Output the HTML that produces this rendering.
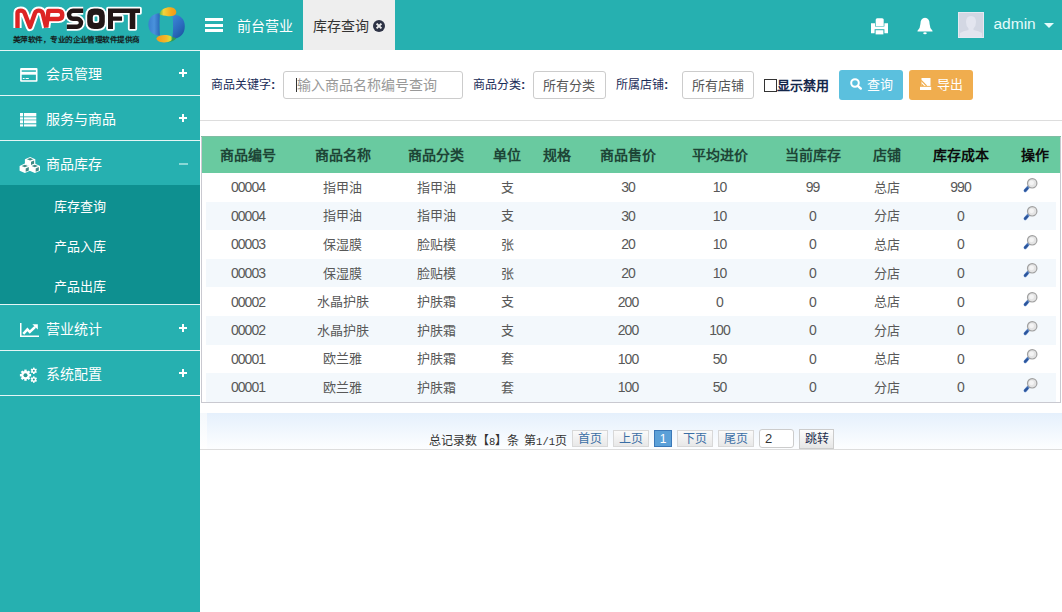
<!DOCTYPE html>
<html lang="zh-CN">
<head>
<meta charset="utf-8">
<style>
*{box-sizing:border-box;margin:0;padding:0}
html,body{width:1062px;height:612px;overflow:hidden;background:#fff;font-family:"Liberation Sans",sans-serif;}
.abs{position:absolute}
#header{position:absolute;left:0;top:0;width:1062px;height:50px;background:#26b0b0}
#sidebar{position:absolute;left:0;top:50px;width:200px;height:562px;background:#26b0b0;border-top:1px solid #e4f6f6}
.mi{position:absolute;left:0;width:200px;height:45px;border-bottom:1px solid #e4f6f6;color:#fff;font-size:14px}
.mi .t{position:absolute;left:46px;top:1px;line-height:44px}
.mi .pl{position:absolute;left:179px;top:18px;width:8px;height:8px}
.mi .pl:before{content:"";position:absolute;left:0;top:3px;width:8px;height:2px;background:#fff}
.mi .pl:after{content:"";position:absolute;left:3px;top:0;width:2px;height:8px;background:#fff}
.sub{position:absolute;left:0;top:185px;width:200px;height:120px;background:#0e9090;border-bottom:1px solid #e4f6f6}
.sub div{position:absolute;left:54px;height:40px;line-height:40px;color:#fff;font-size:13px}
#content{position:absolute;left:200px;top:50px;width:862px;height:562px;background:#fff}
.lbl{position:absolute;font-size:12px;color:#1a2c58;line-height:14px}
.box{position:absolute;border:1px solid #ccc;border-radius:3px;background:#fff;height:28px;top:71px}
.btn{position:absolute;top:70px;height:30px;width:64px;border-radius:3px;color:#fff;font-size:13px}
.tbl{position:absolute;left:201px;top:136px;width:860px;height:267px;border:1px solid #c9c9d0;border-top:none}
table{position:absolute;left:0;top:0;width:858px;border-collapse:collapse;table-layout:fixed}
th{background:#69caa0;height:37px;font-size:14px;font-weight:bold;color:#1d4536;text-align:center;padding:0 0 1px 0}
td{height:28.6px;font-size:13px;color:#585858;text-align:center;padding:0 0 2px 0}
.altbg{position:absolute;left:4px;width:850px;height:28.6px;background:#f3f8fc}
#pager{position:absolute;left:200px;top:413px;width:862px;height:37px;background:linear-gradient(#f4f8fc,#fff);border-bottom:1px solid #ddd}
#pager:after{content:"";position:absolute;left:7px;top:0;right:0;bottom:0;background:linear-gradient(#e5f0fc,#fdfeff)}
.pg{position:absolute;top:430px;height:17px;border:1px solid #d8d8d8;background:linear-gradient(#fafafa,#e8e8e8);color:#3a6ea5;font-size:12px;line-height:17px;text-align:center}
td.n{font-size:14px;letter-spacing:-1px;padding:0}
</style>
</head>
<body>
<div id="header">
<!-- logo -->
<svg class="abs" style="left:0;top:0" width="200" height="50" viewBox="0 0 200 50">
  <defs>
    <linearGradient id="ylw" x1="0" y1="0" x2="1" y2="0"><stop offset="0" stop-color="#f7d425"/><stop offset="1" stop-color="#f29a1e"/></linearGradient>
    <linearGradient id="blu" x1="0" y1="0" x2="1" y2="0"><stop offset="0" stop-color="#2f74c4"/><stop offset="0.35" stop-color="#3f8bd6"/><stop offset="0.65" stop-color="#2a6ec0"/><stop offset="1" stop-color="#3a86d2"/></linearGradient>
    <linearGradient id="bl1" x1="0" y1="0" x2="1" y2="0"><stop offset="0" stop-color="#3a7fcf"/><stop offset="0.5" stop-color="#4a92dc"/><stop offset="1" stop-color="#2868b8"/></linearGradient>
    <linearGradient id="bl2" x1="0" y1="0" x2="0.6" y2="1"><stop offset="0" stop-color="#3d8ad8"/><stop offset="0.6" stop-color="#2c6cc0"/><stop offset="1" stop-color="#1d58a5"/></linearGradient>
    <linearGradient id="yl1" x1="0" y1="0" x2="1" y2="0"><stop offset="0" stop-color="#58b84a"/><stop offset="0.25" stop-color="#f2d43a"/><stop offset="0.7" stop-color="#f5a81c"/><stop offset="1" stop-color="#f29a1a"/></linearGradient>
    <linearGradient id="yl2" x1="0" y1="0" x2="1" y2="0"><stop offset="0" stop-color="#f39a1a"/><stop offset="0.6" stop-color="#f4b82a"/><stop offset="0.85" stop-color="#d9e03a"/><stop offset="1" stop-color="#3aa84a"/></linearGradient>
    <clipPath id="ring"><path clip-rule="evenodd" d="M148 25.1A18.5 18.6 0 1 0 185 25.1A18.5 18.6 0 1 0 148 25.1ZM159.2 25.8A6.8 10.3 0 1 0 172.8 25.8A6.8 10.3 0 1 0 159.2 25.8Z"/></clipPath>
  </defs>
  <g fill="none" stroke-linejoin="round">
    <path d="M17.5 28V13Q17.5 10.6 20.8 10.6Q23.6 10.6 24.6 13L30 27L35 13Q36 10.6 38.8 10.6Q41.6 10.6 42.6 13L46.2 27.5M46.2 27.5L48.5 10.9H58.3Q62.3 10.9 62.3 15Q62.3 19 58.3 19H49.2" stroke="#fff" stroke-width="8.2"/>
    <path d="M17.5 28V13Q17.5 10.6 20.8 10.6Q23.6 10.6 24.6 13L30 27L35 13Q36 10.6 38.8 10.6Q41.6 10.6 42.6 13L46.2 27.5" stroke="#dd2424" stroke-width="4.4"/>
    <path d="M46.2 27.5L48.5 10.9H58.3Q62.3 10.9 62.3 15Q62.3 19 58.3 19H49.2" stroke="#dd2424" stroke-width="4.4"/>
  </g>
  <g fill="none">
    <path d="M83.2 10.8H73A4 4 0 0 0 73 18.8H77A4 4 0 0 1 77 26.8H66.8" stroke="#fff" stroke-width="8"/>
    <path d="M83.2 10.8H73A4 4 0 0 0 73 18.8H77A4 4 0 0 1 77 26.8H66.8" stroke="#221616" stroke-width="4.4"/>
  </g>
  <g fill="#221616" stroke="#fff" stroke-width="3.6" stroke-linejoin="round" paint-order="stroke">
    
    <path fill-rule="evenodd" d="M94.2 8.6H97.8Q104.8 8.6 104.8 15.6V22Q104.8 29 97.8 29H94.2Q87.2 29 87.2 22V15.6Q87.2 8.6 94.2 8.6ZM95 14.8Q92.8 14.8 92.8 17V20.8Q92.8 23 95 23H97Q99.2 23 99.2 20.8V17Q99.2 14.8 97 14.8Z"/>
    <path d="M108 8.6H140V13H135.3V29H129.7V13H113V16.6H122V20.8H113V29H108Z"/>
  </g>
  <text x="13" y="41.6" font-size="7.2" font-weight="bold" fill="#142020" textLength="126.5" lengthAdjust="spacingAndGlyphs">美萍软件，专业的企业管理软件提供商</text>
  <path d="M159.9 13.2C152.5 13.5 148.4 18 148.4 24.6C148.4 31.2 152.5 35.6 159.9 35.8C159.4 28 159.4 21 159.9 13.2Z" fill="url(#bl1)"/>
  <path d="M172.4 14.8C180.8 14.6 184.8 19.2 184.8 26.2C184.8 33.2 181 38.6 172.2 38.6C173.4 31 173.4 22.5 172.4 14.8Z" fill="url(#bl2)"/>
  <path d="M168 42.4C171.5 41.8 174.5 40.4 176.5 38.2L172.2 36.8Z" fill="#2e9a55"/>
  <path d="M159.4 14.6C160.5 8.6 167 6.6 171.8 7.4C175.2 8 176.8 10.6 176.2 13C175.6 15.6 172 16.6 168 16.2C164.5 15.8 161.6 15.3 159.4 14.6Z" fill="url(#yl1)"/>
  <path d="M156.4 38.2C157.8 35.4 162.5 34.6 166.8 35C170 35.4 172.2 36.4 172.8 38C172.2 41 168.4 42.6 163.6 42.4C159.4 42.2 156.4 40.6 156.4 38.2Z" fill="url(#yl2)"/>
</svg>
<!-- hamburger -->
<div class="abs" style="left:205px;top:18px;width:18px;height:3px;background:#fff"></div>
<div class="abs" style="left:205px;top:23.5px;width:18px;height:3px;background:#fff"></div>
<div class="abs" style="left:205px;top:29px;width:18px;height:3px;background:#fff"></div>
<span class="abs" style="left:237px;top:17px;font-size:14px;line-height:18px;color:#fff">前台营业</span>
<div class="abs" style="left:303px;top:0;width:92px;height:50px;background:#eeeeee"></div>
<span class="abs" style="left:313px;top:17px;font-size:14px;line-height:18px;color:#333">库存查询</span>
<svg class="abs" style="left:373px;top:19.5px" width="12" height="12" viewBox="0 0 12 12"><circle cx="6" cy="6" r="6" fill="#2e3345"/><path d="M3.6 3.6L8.4 8.4M8.4 3.6L3.6 8.4" stroke="#eee" stroke-width="2"/></svg>
<!-- printer -->
<svg class="abs" style="left:870.6px;top:17.5px" width="17" height="17" viewBox="0 0 17 17">
  <path d="M4.7 8V1.8Q4.7 0.3 6.2 0.3H11.2Q12.7 0.3 12.7 1.8V8Z" fill="#fff"/>
  <path d="M0 5.3H4V8.6H13.4V5.3H17V15.3H0Z" fill="#fff"/>
  <path d="M3.6 11.2H13.4V16.4H3.6Z" fill="#26b0b0"/>
  <path d="M4.6 12.2H12.4V16.4H4.6Z" fill="#fff"/>
</svg>
<!-- bell -->
<svg class="abs" style="left:917px;top:17px" width="16" height="18" viewBox="0 0 16 18">
  <path d="M8 0.8Q12.5 1 12.6 7Q12.8 11.5 15.5 13.8V14.6H0.5V13.8Q3.2 11.5 3.4 7Q3.5 1 8 0.8Z" fill="#fff"/>
  <ellipse cx="8" cy="16.3" rx="1.8" ry="1" fill="#fff"/>
</svg>
<!-- avatar -->
<svg class="abs" style="left:958px;top:12px" width="26" height="26" viewBox="0 0 26 26">
  <rect x="0.5" y="0.5" width="25" height="25" fill="#d3d7e3" stroke="#e6e9f2"/>
  <path d="M13 4Q18 4 18 10Q18 14 15.5 16.5V18Q21 19 24 21V25H2V21Q5 19 10.5 18V16.5Q8 14 8 10Q8 4 13 4Z" fill="#e3e5ef"/>
</svg>
<span class="abs" style="left:993.5px;top:15px;font-size:15.5px;line-height:18px;color:#e4fbfb">admin</span>
<svg class="abs" style="left:1044px;top:23px" width="10" height="5" viewBox="0 0 10 5"><path d="M0 0H10L5 5Z" fill="#e4fbfb"/></svg>
</div>
<div id="sidebar"></div>
<div class="mi" style="top:51px"><span class="t">会员管理</span><span class="pl"></span></div>
<div class="mi" style="top:96px"><span class="t">服务与商品</span><span class="pl"></span></div>
<div class="mi" style="top:141px;border-bottom:none;height:44px"><span class="t">商品库存</span></div>
<div class="sub">
  <div style="top:1.5px">库存查询</div>
  <div style="top:41.8px">产品入库</div>
  <div style="top:82px">产品出库</div>
</div>
<div class="mi" style="top:306px"><span class="t">营业统计</span><span class="pl"></span></div>
<div class="mi" style="top:351px"><span class="t">系统配置</span><span class="pl"></span></div>


<!-- card icon -->
<svg class="abs" style="left:20px;top:68px" width="18" height="14" viewBox="0 0 18 14">
  <rect x="0.1" y="0" width="17.4" height="13.8" rx="1" fill="#fff"/>
  <rect x="1.7" y="2.3" width="14.2" height="1.5" fill="#26b0b0"/>
  <rect x="1.7" y="6.7" width="14.2" height="5.5" fill="#26b0b0"/>
  <rect x="2.8" y="10" width="1.8" height="1" fill="#fff"/><rect x="5.6" y="10" width="3.2" height="1" fill="#fff"/>
</svg>
<!-- list icon -->
<svg class="abs" style="left:20px;top:112.6px" width="17" height="14" viewBox="0 0 17 14">
  <g fill="#fff">
  <rect x="0" y="0" width="3" height="3.4"/><rect x="3.9" y="0" width="12.4" height="3.4"/>
  <rect x="0" y="4.3" width="3" height="2.3"/><rect x="3.9" y="4.3" width="12.4" height="2.3"/>
  <rect x="0" y="7.3" width="3" height="3"/><rect x="3.9" y="7.3" width="12.4" height="3"/>
  <rect x="0" y="11.3" width="3" height="2.2"/><rect x="3.9" y="11.3" width="12.4" height="2.2"/>
  </g>
</svg>
<!-- cubes icon -->
<svg class="abs" style="left:0;top:0" width="50" height="200" viewBox="0 0 50 200"><path d="M30.1 156.9L35.300000000000004 159.25V163.95L30.1 166.29999999999998L24.900000000000002 163.95V159.25Z" fill="#fff"/><path d="M26.900000000000002 159.29999999999998L30.1 158.1L33.300000000000004 159.29999999999998L30.1 160.5Z" fill="#3f8a84"/><path d="M31.0 161.7L34.1 160.4V163.7L31.0 165.1Z" fill="#3f8a84"/><path d="M24.8 163.60000000000002L30.0 165.95000000000002V170.65L24.8 173.0L19.6 170.65V165.95000000000002Z" fill="#fff"/><path d="M21.6 166.0L24.8 164.8L28.0 166.0L24.8 167.20000000000002Z" fill="#3f8a84"/><path d="M25.7 168.4L28.8 167.10000000000002V170.4L25.7 171.8Z" fill="#3f8a84"/><path d="M34.8 163.60000000000002L40.0 165.95000000000002V170.65L34.8 173.0L29.599999999999998 170.65V165.95000000000002Z" fill="#fff"/><path d="M31.599999999999998 166.0L34.8 164.8L38.0 166.0L34.8 167.20000000000002Z" fill="#3f8a84"/><path d="M35.699999999999996 168.4L38.8 167.10000000000002V170.4L35.699999999999996 171.8Z" fill="#3f8a84"/></svg>
<!-- chart icon -->
<svg class="abs" style="left:20px;top:323px" width="19" height="14" viewBox="0 0 19 14">
  <path d="M0.75 0V13.25H19" fill="none" stroke="#fff" stroke-width="1.5"/>
  <path d="M3.3 10.8L7.4 6.4L9.8 9L15.2 3.8" fill="none" stroke="#fff" stroke-width="2.5"/>
  <path d="M12.4 1.2H17.8V6.6Z" fill="#fff"/>
</svg>
<!-- gears icon -->
<svg class="abs" style="left:0;top:0" width="50" height="400" viewBox="0 0 50 400"><circle cx="25.5" cy="375.2" r="4.1" fill="#fff"/><rect x="24.30" y="369.60" width="2.4" height="11.20" fill="#fff" transform="rotate(0.0 25.5 375.2)"/><rect x="24.30" y="369.60" width="2.4" height="11.20" fill="#fff" transform="rotate(45.0 25.5 375.2)"/><rect x="24.30" y="369.60" width="2.4" height="11.20" fill="#fff" transform="rotate(90.0 25.5 375.2)"/><rect x="24.30" y="369.60" width="2.4" height="11.20" fill="#fff" transform="rotate(135.0 25.5 375.2)"/><circle cx="25.5" cy="375.2" r="2.0" fill="#2a9a92"/><circle cx="33.8" cy="370.8" r="2.4" fill="#fff"/><rect x="33.00" y="367.60" width="1.6" height="6.40" fill="#fff" transform="rotate(0.0 33.8 370.8)"/><rect x="33.00" y="367.60" width="1.6" height="6.40" fill="#fff" transform="rotate(60.0 33.8 370.8)"/><rect x="33.00" y="367.60" width="1.6" height="6.40" fill="#fff" transform="rotate(120.0 33.8 370.8)"/><circle cx="33.8" cy="370.8" r="1.0" fill="#2a9a92"/><circle cx="33.8" cy="379.6" r="2.4" fill="#fff"/><rect x="33.00" y="376.40" width="1.6" height="6.40" fill="#fff" transform="rotate(0.0 33.8 379.6)"/><rect x="33.00" y="376.40" width="1.6" height="6.40" fill="#fff" transform="rotate(60.0 33.8 379.6)"/><rect x="33.00" y="376.40" width="1.6" height="6.40" fill="#fff" transform="rotate(120.0 33.8 379.6)"/><circle cx="33.8" cy="379.6" r="1.0" fill="#2a9a92"/></svg>
<div class="abs" style="left:178.5px;top:162.5px;width:9px;height:2px;background:#8ad8d6"></div>

<div id="content"></div>
<div class="abs" style="left:200px;top:120px;width:862px;height:1px;background:#ddd"></div>

<span class="lbl" style="left:211px;top:78px">商品关键字<b style="font-size:13px">:</b></span>
<div class="box" style="left:283px;width:180px"></div>
<span class="lbl" style="left:473px;top:78px">商品分类<b style="font-size:13px">:</b></span>
<div class="box" style="left:533px;width:73px"></div>
<span class="lbl" style="left:616px;top:78px">所属店铺<b style="font-size:13px">:</b></span>
<div class="box" style="left:682px;width:72px"></div>

<span class="abs" style="left:296px;top:78px;width:1px;height:14px;background:#333"></span>
<span class="abs" style="left:297px;top:76px;font-size:14px;line-height:18px;color:#999">输入商品名称编号查询</span>
<span class="abs" style="left:543px;top:77px;font-size:13px;line-height:18px;color:#555">所有分类</span>
<span class="abs" style="left:692px;top:77px;font-size:13px;line-height:18px;color:#555">所有店铺</span>
<div class="abs" style="left:764px;top:79px;width:13px;height:13px;border:1px solid #333;background:#fff"></div>
<span class="abs" style="left:777px;top:77.5px;font-size:13px;line-height:16px;font-weight:bold;color:#14264a">显示禁用</span>
<div class="btn" style="left:839px;background:#5bc0de">
<svg class="abs" style="left:11px;top:8px" width="13" height="13" viewBox="0 0 13 13"><circle cx="5" cy="5" r="3.8" fill="none" stroke="#fff" stroke-width="2"/><path d="M7.8 7.8L10.8 10.6" stroke="#fff" stroke-width="2.4" stroke-linecap="round"/></svg>
<span class="abs" style="left:28px;top:7px;font-size:13px;line-height:16px">查询</span></div>
<div class="btn" style="left:909px;background:#f0ad4e">
<svg class="abs" style="left:11px;top:7px" width="12" height="14" viewBox="0 0 12 14"><path d="M0 9.8H11.2V13H0Z" fill="#fff"/><path d="M1.5 1H10.5V8.9H1.5Z" fill="#fff"/><path d="M1.2 3.4L6.6 8.9" stroke="#f0ad4e" stroke-width="1.3"/><path d="M1.5 6.2V8.9H4.2Z" fill="#f0ad4e"/></svg>
<span class="abs" style="left:28px;top:7px;font-size:13px;line-height:16px">导出</span></div>

<div class="tbl">
<div class="altbg" style="top:65.6px"></div><div class="altbg" style="top:122.8px"></div><div class="altbg" style="top:180px"></div><div class="altbg" style="top:237.2px"></div>
<table>
<tr><th style="width:92px">商品编号</th><th style="width:97px">商品名称</th><th style="width:90px">商品分类</th><th style="width:52px">单位</th><th style="width:48px">规格</th><th style="width:94px">商品售价</th><th style="width:89px">平均进价</th><th style="width:97px">当前库存</th><th style="width:51px">店铺</th><th style="width:97px;color:#0c0c0c">库存成本</th><th style="color:#0c0c0c">操作</th></tr>
<tr><td class="n">00004</td><td>指甲油</td><td>指甲油</td><td>支</td><td></td><td class="n">30</td><td class="n">10</td><td class="n">99</td><td>总店</td><td class="n">990</td><td><svg width="16" height="15" viewBox="0 0 16 15" style="display:block;margin:-2.5px auto 0 auto;position:relative;left:-5px"><path d="M6.6 8.8L3.2 12.6" stroke="#5a86c8" stroke-width="3.2" stroke-linecap="round"/><path d="M5.2 10.4L3.2 12.6" stroke="#2c549a" stroke-width="2.2" stroke-linecap="round"/><circle cx="10.2" cy="5.3" r="4.7" fill="#e4e4e4" stroke="#a0a0a0" stroke-width="1.2"/><circle cx="9.6" cy="4.8" r="2.4" fill="#f4f4f4"/></svg></td></tr>
<tr><td class="n">00004</td><td>指甲油</td><td>指甲油</td><td>支</td><td></td><td class="n">30</td><td class="n">10</td><td class="n">0</td><td>分店</td><td class="n">0</td><td><svg width="16" height="15" viewBox="0 0 16 15" style="display:block;margin:-2.5px auto 0 auto;position:relative;left:-5px"><path d="M6.6 8.8L3.2 12.6" stroke="#5a86c8" stroke-width="3.2" stroke-linecap="round"/><path d="M5.2 10.4L3.2 12.6" stroke="#2c549a" stroke-width="2.2" stroke-linecap="round"/><circle cx="10.2" cy="5.3" r="4.7" fill="#e4e4e4" stroke="#a0a0a0" stroke-width="1.2"/><circle cx="9.6" cy="4.8" r="2.4" fill="#f4f4f4"/></svg></td></tr>
<tr><td class="n">00003</td><td>保湿膜</td><td>脸贴模</td><td>张</td><td></td><td class="n">20</td><td class="n">10</td><td class="n">0</td><td>总店</td><td class="n">0</td><td><svg width="16" height="15" viewBox="0 0 16 15" style="display:block;margin:-2.5px auto 0 auto;position:relative;left:-5px"><path d="M6.6 8.8L3.2 12.6" stroke="#5a86c8" stroke-width="3.2" stroke-linecap="round"/><path d="M5.2 10.4L3.2 12.6" stroke="#2c549a" stroke-width="2.2" stroke-linecap="round"/><circle cx="10.2" cy="5.3" r="4.7" fill="#e4e4e4" stroke="#a0a0a0" stroke-width="1.2"/><circle cx="9.6" cy="4.8" r="2.4" fill="#f4f4f4"/></svg></td></tr>
<tr><td class="n">00003</td><td>保湿膜</td><td>脸贴模</td><td>张</td><td></td><td class="n">20</td><td class="n">10</td><td class="n">0</td><td>分店</td><td class="n">0</td><td><svg width="16" height="15" viewBox="0 0 16 15" style="display:block;margin:-2.5px auto 0 auto;position:relative;left:-5px"><path d="M6.6 8.8L3.2 12.6" stroke="#5a86c8" stroke-width="3.2" stroke-linecap="round"/><path d="M5.2 10.4L3.2 12.6" stroke="#2c549a" stroke-width="2.2" stroke-linecap="round"/><circle cx="10.2" cy="5.3" r="4.7" fill="#e4e4e4" stroke="#a0a0a0" stroke-width="1.2"/><circle cx="9.6" cy="4.8" r="2.4" fill="#f4f4f4"/></svg></td></tr>
<tr><td class="n">00002</td><td>水晶护肤</td><td>护肤霜</td><td>支</td><td></td><td class="n">200</td><td class="n">0</td><td class="n">0</td><td>总店</td><td class="n">0</td><td><svg width="16" height="15" viewBox="0 0 16 15" style="display:block;margin:-2.5px auto 0 auto;position:relative;left:-5px"><path d="M6.6 8.8L3.2 12.6" stroke="#5a86c8" stroke-width="3.2" stroke-linecap="round"/><path d="M5.2 10.4L3.2 12.6" stroke="#2c549a" stroke-width="2.2" stroke-linecap="round"/><circle cx="10.2" cy="5.3" r="4.7" fill="#e4e4e4" stroke="#a0a0a0" stroke-width="1.2"/><circle cx="9.6" cy="4.8" r="2.4" fill="#f4f4f4"/></svg></td></tr>
<tr><td class="n">00002</td><td>水晶护肤</td><td>护肤霜</td><td>支</td><td></td><td class="n">200</td><td class="n">100</td><td class="n">0</td><td>分店</td><td class="n">0</td><td><svg width="16" height="15" viewBox="0 0 16 15" style="display:block;margin:-2.5px auto 0 auto;position:relative;left:-5px"><path d="M6.6 8.8L3.2 12.6" stroke="#5a86c8" stroke-width="3.2" stroke-linecap="round"/><path d="M5.2 10.4L3.2 12.6" stroke="#2c549a" stroke-width="2.2" stroke-linecap="round"/><circle cx="10.2" cy="5.3" r="4.7" fill="#e4e4e4" stroke="#a0a0a0" stroke-width="1.2"/><circle cx="9.6" cy="4.8" r="2.4" fill="#f4f4f4"/></svg></td></tr>
<tr><td class="n">00001</td><td>欧兰雅</td><td>护肤霜</td><td>套</td><td></td><td class="n">100</td><td class="n">50</td><td class="n">0</td><td>总店</td><td class="n">0</td><td><svg width="16" height="15" viewBox="0 0 16 15" style="display:block;margin:-2.5px auto 0 auto;position:relative;left:-5px"><path d="M6.6 8.8L3.2 12.6" stroke="#5a86c8" stroke-width="3.2" stroke-linecap="round"/><path d="M5.2 10.4L3.2 12.6" stroke="#2c549a" stroke-width="2.2" stroke-linecap="round"/><circle cx="10.2" cy="5.3" r="4.7" fill="#e4e4e4" stroke="#a0a0a0" stroke-width="1.2"/><circle cx="9.6" cy="4.8" r="2.4" fill="#f4f4f4"/></svg></td></tr>
<tr><td class="n">00001</td><td>欧兰雅</td><td>护肤霜</td><td>套</td><td></td><td class="n">100</td><td class="n">50</td><td class="n">0</td><td>分店</td><td class="n">0</td><td><svg width="16" height="15" viewBox="0 0 16 15" style="display:block;margin:-2.5px auto 0 auto;position:relative;left:-5px"><path d="M6.6 8.8L3.2 12.6" stroke="#5a86c8" stroke-width="3.2" stroke-linecap="round"/><path d="M5.2 10.4L3.2 12.6" stroke="#2c549a" stroke-width="2.2" stroke-linecap="round"/><circle cx="10.2" cy="5.3" r="4.7" fill="#e4e4e4" stroke="#a0a0a0" stroke-width="1.2"/><circle cx="9.6" cy="4.8" r="2.4" fill="#f4f4f4"/></svg></td></tr>
</table>
<div style="position:absolute;left:-1px;top:0;width:860px;height:1px;background:#80bda3"></div>
</div>

<div id="pager"></div>
<span class="abs" style="left:429px;top:433px;font-size:12px;line-height:16px;color:#333;white-space:nowrap">总记录数【<span style="font-family:'Liberation Mono',monospace;font-size:10.5px">8</span>】条<span style="display:inline-block;width:4.8px"></span>第<span style="font-family:'Liberation Mono',monospace;font-size:10.5px">1/1</span>页</span>
<div class="pg" style="left:572px;width:36px">首页</div>
<div class="pg" style="left:613px;width:36px">上页</div>
<div class="pg" style="left:654px;width:18px;background:#5ba0d8;border-color:#3a78b8;color:#fff">1</div>
<div class="pg" style="left:677px;width:36px">下页</div>
<div class="pg" style="left:718px;width:36px">尾页</div>
<div class="abs" style="left:759px;top:428.5px;width:35px;height:19px;border:1px solid #ccc;border-radius:3px;background:#fff;font-size:13px;line-height:17px;padding-left:5px;color:#333">2</div>
<div class="abs" style="left:799px;top:428.5px;width:35px;height:20px;border:1px solid #ccc;background:linear-gradient(#fdfdfd,#e6e6e6);font-size:12px;line-height:18px;text-align:center;color:#1d2d4d">跳转</div>
</body>
</html>
